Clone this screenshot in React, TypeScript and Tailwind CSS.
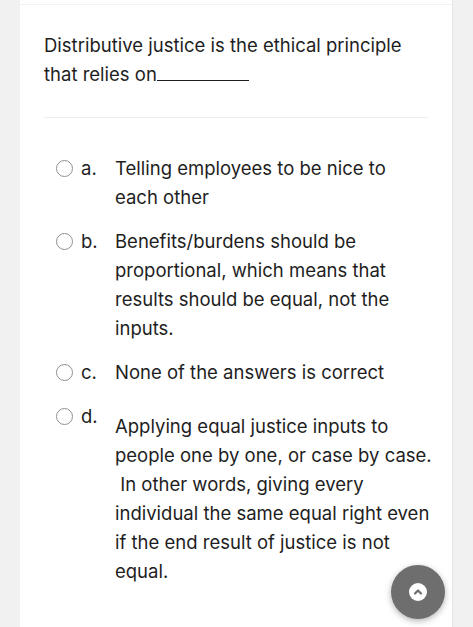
import React from 'react';

const options = [
  { key: 'a.', text: 'Telling employees to be nice to each other' },
  { key: 'b.', text: 'Benefits/burdens should be proportional, which means that results should be equal, not the inputs.' },
  { key: 'c.', text: 'None of the answers is correct' },
  {
    key: 'd.',
    text: 'Applying equal justice inputs to people one by one, or case by case. \u00a0In other words, giving every individual the same equal right even if the end result of justice is not equal.',
    offset: true,
  },
];

export default function App() {
  return (
    <div
      className="min-h-[627px] w-full bg-[#f1f1f1] text-[#1e1e1e]"
      style={{ fontFamily: 'Inter, "Liberation Sans", Arial, sans-serif' }}
    >
      <div className="relative mx-[20px] min-h-[627px] border-r border-[#e4e4e4] bg-white">
        <div className="h-[5px] border-b border-[#f2f2f2]" />
        {/* Question */}
        <div className="px-[24px] pt-[26px] text-[18.5px] leading-[29px]">
          Distributive justice is the ethical principle that relies on
          <span className="inline-block w-[92px] border-b border-[#1e1e1e] align-baseline" />
        </div>
        <div className="mx-[24px] mt-[28px] h-px bg-[#ececec]" />

        {/* Answers */}
        <div className="flex flex-col gap-[15px] px-[24px] pt-[36px] text-[18.5px] leading-[29px]">
          {options.map((o) => (
            <div key={o.key} className="flex items-start">
              <div className="flex h-[29px] w-[37px] shrink-0 items-center pl-[12px]">
                <span className="h-[17px] w-[17px] rounded-full border-[1.5px] border-[#909090]" />
              </div>
              <span className="w-[34px] shrink-0">{o.key}</span>
              <span className={o.offset ? 'mt-[10px] w-[326px] shrink-0' : 'w-[317px] shrink-0'}>{o.text}</span>
            </div>
          ))}
        </div>

        {/* Scroll to top button */}
        <button className="absolute left-[371px] top-[565px] flex h-[54px] w-[54px] items-center justify-center rounded-full bg-[#6e6e6e] shadow-[0_2px_6px_rgba(0,0,0,0.3)]">
          <span className="flex h-[18px] w-[18px] items-center justify-center rounded-full bg-white">
            <svg width="10" height="10" viewBox="0 0 10 10" fill="none">
              <path d="M2 6.5 L5 3.5 L8 6.5" stroke="#6e6e6e" strokeWidth="2.2" strokeLinecap="round" strokeLinejoin="round" />
            </svg>
          </span>
        </button>
      </div>
    </div>
  );
}
